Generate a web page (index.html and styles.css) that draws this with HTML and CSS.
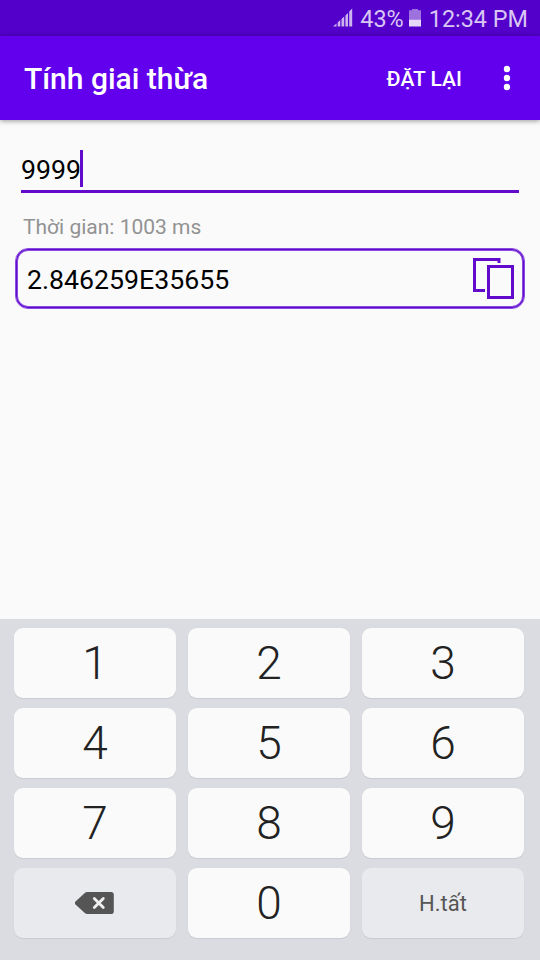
FILE: index.html
```html
<!DOCTYPE html>
<html lang="vi">
<head>
  <title>Tính giai thừa</title>
  <meta charset="UTF-8" />
  <meta name="viewport" content="width=device-width, initial-scale=1" />
  <link rel="stylesheet" href="styles.css">
</head>
<body>
  <div class="status-bar">
    <svg class="signal" width="20" height="20" viewBox="0 0 20 20">
      <path d="M0 18.500L3.500 15.500V18.500ZM4.700 14.500L7.300 12V18.500H4.700ZM8.500 11L11.200 8.500V18.500H8.500ZM12.400 7.500L15 5V18.500H12.400ZM16.200 3.500L19.200 .5V18.500H16.200Z" />
    </svg>
    <span class="percent">43%</span>
    <svg class="battery" width="12" height="18" viewBox="0 0 12 18">
      <path class="battery-empty" d="M3 0H9V1.200H12V10.500H0V1.200H3Z" />
      <path class="battery-level" d="M0 10.500H12V17.500H0Z" />
    </svg>
    <span class="clock">12:34 PM</span>
  </div>

  <header class="app-bar">
    <h1>Tính giai thừa</h1>
    <button class="reset">ĐẶT LẠI</button>
    <button class="more" aria-label="Menu">
      <svg width="8" height="26" viewBox="0 0 8 26">
        <circle cx="4" cy="4" r="3.200" />
        <circle cx="4" cy="13" r="3.200" />
        <circle cx="4" cy="22" r="3.200" />
      </svg>
    </button>
  </header>

  <main class="content">
    <div class="input">
      <span>9999</span>
      <i class="cursor"></i>
    </div>
    <p class="time">Thời gian: 1003 ms</p>
    <div class="result">
      <span>2.846259E35655</span>
      <button class="copy" aria-label="Copy">
        <svg width="42" height="42" viewBox="0 0 42 42">
          <path d="M12 32.500H1.500V1.500H26V5" />
          <path d="M15.500 8.500H39.500V39.500H15.500Z" />
        </svg>
      </button>
    </div>
  </main>

  <div class="keyboard">
    <button class="key">1</button>
    <button class="key">2</button>
    <button class="key">3</button>
    <button class="key">4</button>
    <button class="key">5</button>
    <button class="key">6</button>
    <button class="key">7</button>
    <button class="key">8</button>
    <button class="key">9</button>
    <button class="key key-action" aria-label="Delete">
      <svg width="40" height="22" viewBox="0 0 40 22">
        <path class="delete-shape" d="M.5 9.500L9.500 1.200Q10.700 0 12.500 0H36Q38.800 0 38.800 2.800V19.200Q38.800 22 36 22H12.500Q10.700 22 9.500 20.800L.5 12.500Q-.8 11 .5 9.500Z" />
        <path class="delete-cross" d="M19.300 6.500L28.300 15.500M28.300 6.500L19.300 15.500" />
      </svg>
    </button>
    <button class="key">0</button>
    <button class="key key-action">H.tất</button>
  </div>
</body>
</html>
```
FILE: styles.css
```css
:root {
  --primary: #6200ee;
  --primary-dark: #5300ca;
  --accent: #620acb;
  --accent-light: #8a4be0;
  --bg: #fafafa;
  --keyboard: #dbdce1;
}

* {
  box-sizing: border-box;
}

body {
  margin: 0;
  height: 100vh;
  display: flex;
  flex-direction: column;
  overflow: hidden;
  background-color: var(--bg);
  font-family: Roboto, sans-serif;
}

button {
  padding: 0;
  border: none;
  background: none;
  font-family: inherit;
  color: inherit;
  cursor: pointer;
}

svg {
  display: block;
}

/* Status bar */
.status-bar {
  height: 36px;
  padding: 2px 12px 0 0;
  display: flex;
  align-items: center;
  justify-content: flex-end;
  background-color: var(--primary-dark);
  color: #d9c6f4;
  font-size: 23.4px;
  line-height: 34px;
}

.signal {
  margin: 0 7px 2px 0;
  fill: #cdb2f0;
}

.battery {
  margin: 0 8px 2px 5px;
}

.battery-empty {
  fill: #9d72df;
}

.battery-level {
  fill: #e7daf8;
}

/* App bar */
.app-bar {
  height: 84px;
  padding: 0 29px 0 24px;
  display: flex;
  align-items: center;
  background-color: var(--primary);
  color: #fff;
  box-shadow: 0 1px 5px rgba(0, 0, 0, 0.4);
}

.app-bar h1 {
  flex: 1;
  margin: 0;
  font-size: 30px;
  font-weight: 500;
}

.reset {
  padding-top: 1px;
  font-size: 21px;
  font-weight: 500;
}

.more {
  margin-left: 41px;
}

.more svg {
  fill: #fff;
}

/* Content */
.content {
  flex: 1;
  padding: 30px 15px 0;
}

.input {
  height: 43px;
  margin: 0 6px;
  display: flex;
  border-bottom: 3px solid var(--accent);
  font-size: 26.700px;
  line-height: 41px;
}

.cursor {
  width: 3px;
  height: 37px;
  margin-left: -1px;
  background-color: var(--accent);
}

.time {
  height: 55px;
  margin: 0;
  padding: 20px 8px 0;
  color: #929292;
  font-size: 21px;
  line-height: 28px;
}

.result {
  height: 61px;
  padding: 0 9px 0 11px;
  display: flex;
  align-items: center;
  justify-content: space-between;
  border: 1px solid var(--accent-light);
  border-radius: 13px;
  box-shadow: inset 0 0 0 1px var(--accent), inset 0 0 0 2px var(--accent-light);
  font-size: 26.700px;
}

.result span {
  padding-top: 2px;
}

.copy svg {
  fill: none;
  stroke: var(--accent);
  stroke-width: 3;
}

/* Keyboard */
.keyboard {
  height: 341px;
  padding: 9px 16px 22px 14px;
  display: grid;
  grid-template-columns: repeat(3, 1fr);
  grid-template-rows: repeat(4, 70px);
  gap: 10px 12px;
  background-color: var(--keyboard);
}

.key {
  display: flex;
  align-items: center;
  justify-content: center;
  border-radius: 9px;
  background-color: var(--bg);
  box-shadow: 0 1px 1px rgba(0, 0, 0, 0.08);
  color: #222;
  font-size: 46px;
  font-weight: 300;
}

.key-action {
  background-color: #e9eaee;
  color: #555;
  font-size: 22px;
  font-weight: 400;
}

.delete-shape {
  fill: #555;
}

.delete-cross {
  fill: none;
  stroke: #f0f0f2;
  stroke-width: 2.800;
  stroke-linecap: round;
}
```
